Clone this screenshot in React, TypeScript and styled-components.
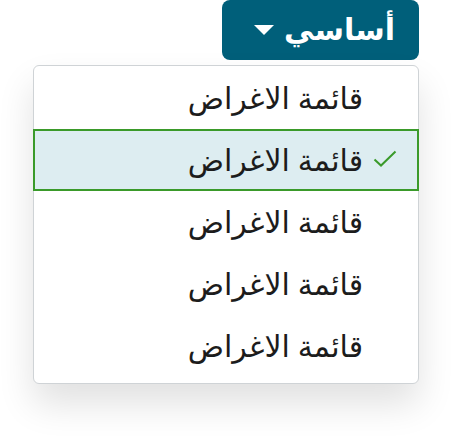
import React from "react";
import styled, { createGlobalStyle } from "styled-components";

const GlobalStyle = createGlobalStyle`
  html, body {
    margin: 0;
    padding: 0;
    background: #ffffff;
  }
  body {
    font-family: "Noto Sans", "DejaVu Sans", sans-serif;
  }
`;

const Page = styled.div`
  direction: rtl;
  width: 451px;
  min-height: 440px;
  padding: 0 32px 0 33px;
  box-sizing: border-box;
  display: flex;
  flex-direction: column;
  align-items: flex-start;
  gap: 5px;
`;

const Toggle = styled.button`
  display: flex;
  align-items: center;
  gap: 10px;
  height: 60px;
  padding: 0 24px 4px 32px;
  border: none;
  border-radius: 8px;
  background: #005f7a;
  color: #ffffff;
  font-family: inherit;
  font-size: 30px;
  font-weight: 700;
  cursor: pointer;
`;

const Caret = styled.span`
  width: 0;
  height: 0;
  border-left: 10px solid transparent;
  border-right: 10px solid transparent;
  border-top: 10px solid #ffffff;
  margin-top: 4px;
`;

const Menu = styled.ul`
  list-style: none;
  margin: 0;
  padding: 1px 0 6px;
  width: 100%;
  box-sizing: border-box;
  border: 1px solid #cfd3d6;
  border-radius: 6px;
  background: #ffffff;
  box-shadow: 0 20px 36px rgba(0, 0, 0, 0.12);
`;

const Item = styled.li<{ $selected?: boolean }>`
  display: flex;
  align-items: center;
  height: 62px;
  box-sizing: border-box;
  padding: 0 20px 2px;
  gap: 10px;
  font-size: 30px;
  color: #1c1c1c;
  background: ${(p) => (p.$selected ? "#ddedf1" : "transparent")};
  border: 2px solid ${(p) => (p.$selected ? "#3a9a2a" : "transparent")};
  margin: 0 -1px;
`;

const Check = styled.span`
  width: 24px;
  display: flex;
  justify-content: center;
`;

const CheckSlot = styled.span`
  width: 24px;
`;

const items = ["قائمة الاغراض", "قائمة الاغراض", "قائمة الاغراض", "قائمة الاغراض", "قائمة الاغراض"];

export default function App() {
  return (
    <>
      <GlobalStyle />
      <Page>
        <Toggle>
          <span>أساسي</span>
          <Caret />
        </Toggle>
        <Menu>
          {items.map((label, i) => (
            <Item key={i} $selected={i === 1}>
              {i === 1 ? (
                <Check>
                  <svg width="24" height="18" viewBox="0 0 24 18" fill="none">
                    <path d="M1.5 9.5 L8 15.5 L22.5 1.5" stroke="#3a9a2a" strokeWidth="2" />
                  </svg>
                </Check>
              ) : (
                <CheckSlot />
              )}
              <span>{label}</span>
            </Item>
          ))}
        </Menu>
      </Page>
    </>
  );
}
